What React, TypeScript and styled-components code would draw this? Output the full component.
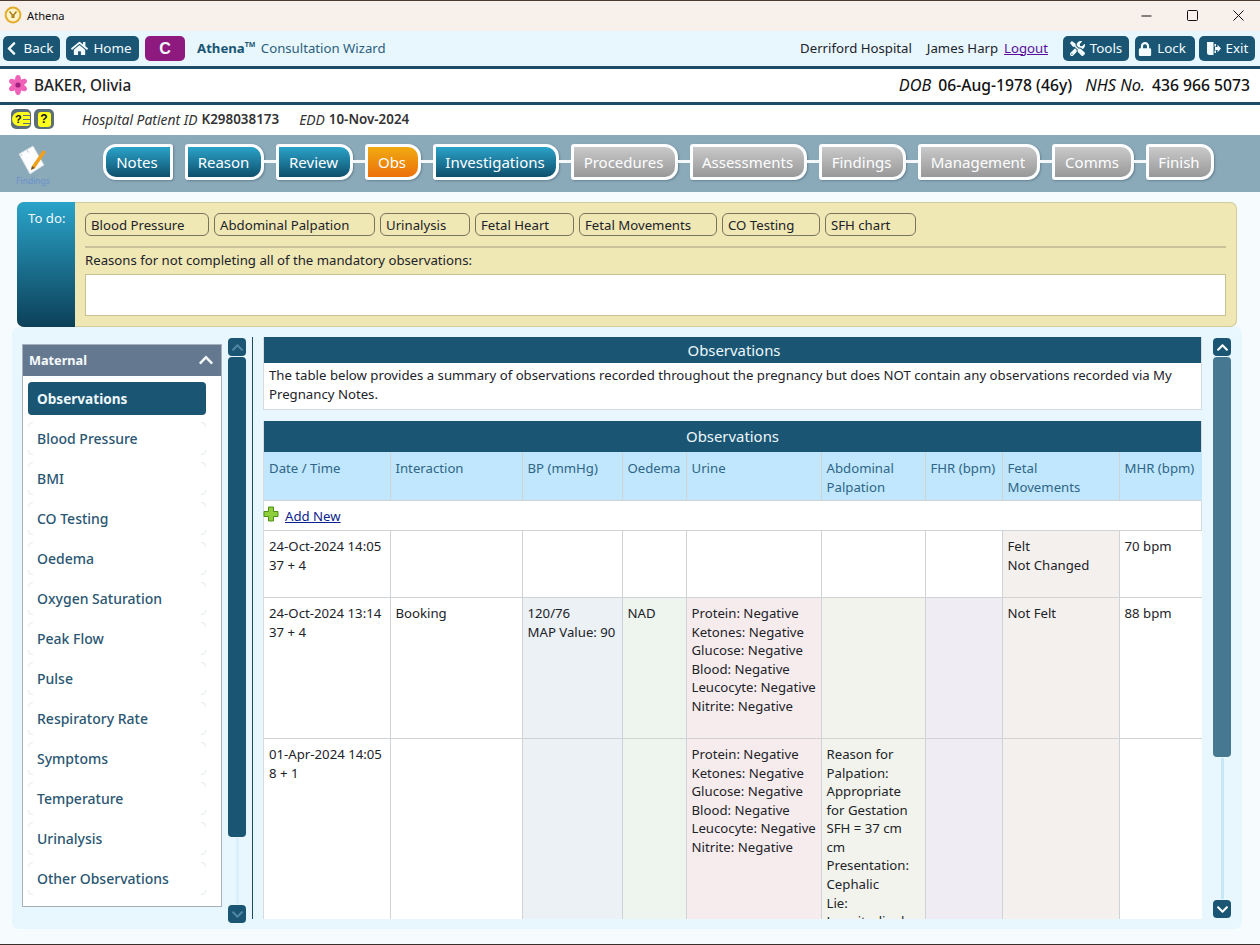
import React from 'react';
import styled, { createGlobalStyle, css } from 'styled-components';
import { FaChevronLeft, FaChevronUp, FaChevronDown, FaHome, FaTools, FaLock } from 'react-icons/fa';

const FONT = `"Noto Sans", "Open Sans", sans-serif`;
const navy = '#1a5673';
const line = '#d0d3d6';

const GlobalStyle = createGlobalStyle`
  html, body { margin: 0; padding: 0; }
  body {
    font-family: ${FONT};
    font-size: 13.2px;
    color: #1c2329;
    background: #f6fbfd;
    overflow: hidden;
  }
`;

type Step = { label: string; w: number; tone: 'done' | 'current' | 'todo'; shape: 'first' | 'rest'; linked: boolean };

const steps: Step[] = [
  { label: 'Notes', w: 70, tone: 'done', shape: 'first', linked: false },
  { label: 'Reason', w: 79, tone: 'done', shape: 'rest', linked: false },
  { label: 'Review', w: 77, tone: 'done', shape: 'rest', linked: true },
  { label: 'Obs', w: 56, tone: 'current', shape: 'rest', linked: true },
  { label: 'Investigations', w: 126, tone: 'done', shape: 'rest', linked: true },
  { label: 'Procedures', w: 107, tone: 'todo', shape: 'rest', linked: true },
  { label: 'Assessments', w: 117, tone: 'todo', shape: 'rest', linked: true },
  { label: 'Findings', w: 87, tone: 'todo', shape: 'rest', linked: true },
  { label: 'Management', w: 122, tone: 'todo', shape: 'rest', linked: true },
  { label: 'Comms', w: 82, tone: 'todo', shape: 'rest', linked: true },
  { label: 'Finish', w: 68, tone: 'todo', shape: 'rest', linked: true },
];

const todos = [
  { label: 'Blood Pressure', w: 124 },
  { label: 'Abdominal Palpation', w: 161 },
  { label: 'Urinalysis', w: 90 },
  { label: 'Fetal Heart', w: 99 },
  { label: 'Fetal Movements', w: 138 },
  { label: 'CO Testing', w: 98 },
  { label: 'SFH chart', w: 91 },
];

const menu = [
  'Observations', 'Blood Pressure', 'BMI', 'CO Testing', 'Oedema', 'Oxygen Saturation', 'Peak Flow',
  'Pulse', 'Respiratory Rate', 'Symptoms', 'Temperature', 'Urinalysis', 'Other Observations',
];

const columns = [
  { title: 'Date / Time', w: 126, tint: '#ffffff' },
  { title: 'Interaction', w: 132, tint: '#ffffff' },
  { title: 'BP (mmHg)', w: 100, tint: '#ecf1f5' },
  { title: 'Oedema', w: 64, tint: '#eef4ee' },
  { title: 'Urine', w: 135, tint: '#f6eced' },
  { title: 'Abdominal Palpation', w: 104, tint: '#f2f3ec' },
  { title: 'FHR (bpm)', w: 77, tint: '#efecf4' },
  { title: 'Fetal Movements', w: 117, tint: '#f4f0ed' },
  { title: 'MHR (bpm)', w: 83, tint: '#ffffff' },
];

const urine = ['Protein: Negative', 'Ketones: Negative', 'Glucose: Negative', 'Blood: Negative', 'Leucocyte: Negative', 'Nitrite: Negative'];

// only the columns listed in `filled` carry their tint on that row
const rows: { h?: number; filled: number[]; cells: string[][] }[] = [
  {
    h: 67,
    filled: [7],
    cells: [['24-Oct-2024 14:05', '37 + 4'], [], [], [], [], [], [], ['Felt', 'Not Changed'], ['70 bpm']],
  },
  {
    h: 141,
    filled: [2, 3, 4, 5, 6, 7],
    cells: [['24-Oct-2024 13:14', '37 + 4'], ['Booking'], ['120/76', 'MAP Value: 90'], ['NAD'], urine, [], [], ['Not Felt'], ['88 bpm']],
  },
  {
    filled: [2, 3, 4, 5, 6, 7],
    cells: [
      ['01-Apr-2024 14:05', '8 + 1'], [], [], [], urine,
      ['Reason for', 'Palpation:', 'Appropriate', 'for Gestation', 'SFH = 37 cm', 'cm', 'Presentation:', 'Cephalic', 'Lie:', 'Longitudinal'],
      [], [], [],
    ],
  },
];

const Window = styled.div`
  width: 1260px;
  height: 945px;
  display: flex;
  flex-direction: column;
  overflow: hidden;
  border-top: 1px solid #4b3a30;
  border-bottom: 1px solid #3a2f2a;
  box-sizing: border-box;
`;

const TitleBar = styled.div`
  height: 30px;
  box-sizing: border-box;
  flex: none;
  background: #f7f0eb;
  display: flex;
  align-items: center;
  padding: 0 0 2px 4px;
  gap: 5px;
  font-size: 11.2px;
  color: #111;
`;

const WindowControls = styled.div`
  margin-left: auto;
  margin-right: -1px;
  display: flex;
  align-items: center;
`;

const WindowButton = styled.div`
  width: 46px;
  height: 28px;
  display: flex;
  align-items: center;
  justify-content: center;
`;

const Toolbar = styled.div`
  height: 35px;
  flex: none;
  background: #e8f6fe;
  display: flex;
  align-items: center;
  padding: 0 5px 0 3px;
`;

const ToolButton = styled.div<{ $w: number; $mr?: number; $pr?: number; $purple?: boolean }>`
  width: ${p => p.$w}px;
  height: 25px;
  box-sizing: border-box;
  margin-right: ${p => p.$mr ?? 6}px;
  padding: 0 ${p => p.$pr ?? 0}px 2px 0;
  border-radius: 5px;
  background: ${p => (p.$purple ? '#8e1a80' : navy)};
  color: #f4fbff;
  display: flex;
  align-items: center;
  justify-content: center;
  gap: 5px;
  font-size: 13.4px;
  svg { margin-top: 2px; }
  ${p => p.$purple && css`font-family: "Liberation Sans", sans-serif; font-weight: 700; font-size: 16px; padding-bottom: 0;`}
`;

const AppName = styled.div`
  margin: 0 0 2px 6px;
  color: #2b5f7c;
  b { color: ${navy}; font-weight: 700; }
  sup { font-size: 7px; font-weight: 700; line-height: 0; color: ${navy}; margin-right: 2px; }
`;

const UserArea = styled.div`
  margin-left: auto;
  display: flex;
  align-items: center;
  color: #1c2329;
`;

const UserText = styled.span`
  margin-bottom: 2px;
`;

const Logout = styled.a`
  color: #5a0d9c;
  text-decoration: underline;
  margin: 0 15px 2px 6px;
`;

const Hospital = styled(UserText)`
  margin-right: 15px;
`;

const PatientBar = styled.div`
  height: 31px;
  flex: none;
  box-sizing: content-box;
  background: #fff;
  border-top: 3px solid #1d4d66;
  border-bottom: 3px solid #1d4d66;
  display: flex;
  align-items: center;
  padding: 0 10px 2px 8px;
  font-size: 15.7px;
  line-height: 30px;
`;

const PatientName = styled.div`
  margin-left: 6px;
  font-weight: 500;
  color: #222;
  font-size: 15.3px;
`;

const PatientFacts = styled.div`
  margin-left: auto;
  color: #111;
  i { margin: 0 3px 0 13px; font-size: 16.3px; }
  b { font-weight: 500; }
`;

const InfoRow = styled.div`
  height: 30px;
  box-sizing: border-box;
  flex: none;
  background: #fff;
  display: flex;
  align-items: center;
  padding: 0 0 2px 11px;
  color: #333;
  i { margin-right: 4px; font-size: 13.9px; }
  b { font-weight: 600; margin-right: 20px; font-size: 13.4px; }
`;

const Badges = styled.div`
  display: flex;
  gap: 3px;
  margin-right: 28px;
`;

const Badge = styled.div`
  width: 20px;
  height: 20px;
  border-radius: 5px;
  background: #5c6f78;
  display: flex;
  align-items: center;
  justify-content: center;
`;

const HandFace = styled.div`
  width: 18px;
  height: 14px;
  border-radius: 7px 3px 3px 7px;
  background: #ffff1e;
  display: flex;
  align-items: center;
  color: #111;
  font: 700 11px/14px "Liberation Sans", sans-serif;
  padding-left: 3px;
  box-sizing: border-box;
  gap: 1px;
`;

const HandFingers = styled.div`
  flex: 1;
  height: 9px;
  background: repeating-linear-gradient(#5c6f78 0 1px, #ffff1e 1px 4px);
`;

const BadgeFace = styled.div`
  width: 13px;
  height: 15px;
  border-radius: 3px;
  background: #ffff1e;
  color: #111;
  font: 700 12px/15px "Liberation Sans", sans-serif;
  text-align: center;
`;

const NavBar = styled.div`
  height: 57px;
  flex: none;
  background: #8aa9b9;
  display: flex;
  align-items: flex-start;
`;

const NavIcon = styled.div`
  width: 103px;
  height: 57px;
  flex: none;
  display: flex;
  flex-direction: column;
  align-items: center;
  padding: 10px 37px 0 0;
  box-sizing: border-box;
  font-size: 8.5px;
  color: #6a92cc;
  line-height: 10px;
`;

const NavSteps = styled.div`
  display: flex;
  align-items: center;
  gap: 12px;
  margin-top: 9px;
`;

const toneBg = {
  done: 'linear-gradient(#2aa3c9, #0f4f6c)',
  current: 'linear-gradient(#f0aa10, #ec700c)',
  todo: 'linear-gradient(#c9c9c9, #989898)',
};

const NavStep = styled.div<{ $w: number; $tone: Step['tone']; $shape: Step['shape']; $linked: boolean }>`
  position: relative;
  width: ${p => p.$w}px;
  height: 36px;
  box-sizing: border-box;
  padding-right: 2px;
  border: 3px solid #fbfdfe;
  border-radius: ${p => (p.$shape === 'first' ? '13px 3px 3px 13px' : '3px 13px 13px 3px')};
  background: ${p => toneBg[p.$tone]};
  box-shadow: 1px 1px 2px rgba(40, 60, 70, 0.35);
  color: #fdfeff;
  font-size: 15px;
  display: flex;
  align-items: center;
  justify-content: center;
  ${p => p.$linked && css`
    &::before {
      content: '';
      position: absolute;
      left: -15px;
      top: 13px;
      width: 12px;
      height: 3px;
      background: #f4f8fa;
    }
  `}
`;

const Body = styled.div`
  flex: 1;
  min-height: 0;
  display: flex;
  flex-direction: column;
  padding: 10px 18px 15px 12px;
`;

const TodoPanel = styled.div`
  margin: 0 5px;
  height: 125px;
  flex: none;
  display: flex;
  border-radius: 7px;
  overflow: hidden;
  background: #efe7b4;
  box-shadow: inset 0 0 0 1px #d2cb9d;
`;

const TodoLabel = styled.div`
  width: 58px;
  flex: none;
  box-sizing: border-box;
  padding: 7px 0 0 11px;
  color: #eef9ff;
  background: linear-gradient(#2aa3c9, #0c4058);
`;

const TodoBody = styled.div`
  flex: 1;
  padding: 11px 11px 11px 10px;
  display: flex;
  flex-direction: column;
`;

const TodoChips = styled.div`
  display: flex;
  gap: 5px;
  padding-bottom: 10px;
  border-bottom: 2px solid #c9c298;
`;

const TodoChip = styled.div<{ $w: number }>`
  width: ${p => p.$w}px;
  height: 23px;
  box-sizing: border-box;
  border: 1px solid #77735c;
  border-radius: 6px;
  padding-left: 5px;
  line-height: 22px;
  color: #1c2329;
`;

const TodoPrompt = styled.div`
  margin-top: 1px;
  height: 22px;
  line-height: 22px;
`;

const ReasonBox = styled.div`
  flex: 1;
  margin-top: 3px;
  background: #fff;
  border: 1px solid #c7c08f;
`;

const Main = styled.div`
  flex: 1;
  min-height: 0;
  display: flex;
  background: #e8f6fe;
  border-radius: 7px;
  padding: 10px;
`;

const SideColumn = styled.div`
  width: 200px;
  flex: none;
  padding-top: 7px;
  overflow: hidden;
  display: flex;
  flex-direction: column;
  gap: 14px;
`;

const MenuPanel = styled.div`
  border: 1px solid #a7b1bb;
  background: #fff;
  flex: none;
`;

const MenuHeader = styled.div`
  height: 31px;
  box-sizing: border-box;
  background: #64798f;
  color: #f5f9fc;
  display: flex;
  align-items: center;
  justify-content: space-between;
  padding: 0 7px 2px 6px;
  font-weight: 700;
  font-size: 12.7px;
`;

const MenuList = styled.div`
  padding: 6px 15px 11px 5px;
  display: flex;
  flex-direction: column;
  gap: 7px;
`;

const MenuItem = styled.div<{ $active?: boolean }>`
  position: relative;
  height: 33px;
  box-sizing: border-box;
  border-radius: 4px;
  padding-left: 9px;
  display: flex;
  align-items: center;
  font-weight: 500;
  font-size: 14px;
  color: ${p => (p.$active ? '#eef7fb' : '#2a5672')};
  background: ${p => (p.$active ? navy : 'transparent')};
  ${p => p.$active && css`font-weight: 700; font-size: 13.6px;`}
  ${p => !p.$active && css`
    border: 1px solid #e3ebef;
    padding-left: 8px;
    &::before {
      content: '';
      position: absolute;
      left: 4px; right: 4px; top: -1px; bottom: -1px;
      background: #fff;
    }
    &::after {
      content: '';
      position: absolute;
      left: -1px; right: -1px; top: 4px; bottom: 4px;
      background: #fff;
    }
  `}
  span { position: relative; z-index: 1; }
`;

const CollapsedPanel = styled.div`
  height: 30px;
  flex: none;
  border: 1px solid #a7b1bb;
  background: #fff;
`;

const ScrollBar = styled.div<{ $h: number }>`
  width: 18px;
  flex: none;
  margin-top: 1px;
  height: ${p => p.$h}px;
  display: flex;
  flex-direction: column;
  align-items: center;
  gap: 1px;
`;

const ScrollButton = styled.div<{ $dim?: boolean }>`
  width: 18px;
  height: 18px;
  flex: none;
  border-radius: 4px;
  background: ${navy};
  color: ${p => (p.$dim ? '#4f86a2' : '#fff')};
  display: flex;
  align-items: center;
  justify-content: center;
`;

const ScrollThumb = styled.div<{ $h: number; $light?: boolean }>`
  width: 18px;
  height: ${p => p.$h}px;
  flex: none;
  border-radius: 4px;
  background: ${p => (p.$light ? '#467991' : navy)};
`;

const ScrollTrack = styled.div<{ $pale?: boolean }>`
  flex: 1;
  width: 3px;
  background: ${p => (p.$pale ? '#d9effb' : '#c6e7f8')};
`;

const SideGap = styled.div<{ $w: number }>`
  width: ${p => p.$w}px;
  flex: none;
`;

const Divider = styled.div`
  width: 1px;
  flex: none;
  margin: 0 10px 0 6px;
  background: #1d4d66;
  height: 582px;
`;

const Content = styled.div`
  width: 939px;
  flex: none;
  height: 582px;
  overflow: hidden;
  display: flex;
  flex-direction: column;
  gap: 11px;
`;

const Panel = styled.div`
  background: #fff;
  border: 1px solid #d5dbdf;
  border-top: 0;
  flex: none;
`;

const PanelHeader = styled.div<{ $h: number; $pl?: number }>`
  height: ${p => p.$h}px;
  box-sizing: border-box;
  padding: 0 0 1px ${p => p.$pl ?? 0}px;
  background: ${navy};
  color: #eef7fb;
  font-size: 14.9px;
  display: flex;
  align-items: center;
  justify-content: center;
`;

const PanelText = styled.div`
  padding: 3px 5px 6px;
  line-height: 18.7px;
`;

const Table = styled.table`
  width: 938px;
  table-layout: fixed;
  border-collapse: collapse;
`;

const HeadCell = styled.th`
  background: #c0e7fd;
  border-right: 1px solid ${line};
  border-bottom: 1px solid ${line};
  height: 48px;
  padding: 7px 5px 0 5px;
  box-sizing: border-box;
  vertical-align: top;
  text-align: left;
  font-weight: 400;
  color: #2f6686;
  line-height: 18.7px;
  &:last-child { border-right: 0; padding-right: 0; }
`;

const AddCell = styled.td`
  height: 30px;
  box-sizing: border-box;
  padding: 0 5px 0 0;
  border-bottom: 1px solid ${line};
`;

const AddLink = styled.div`
  display: flex;
  align-items: center;
  gap: 6px;
  a { color: #0d1f8c; text-decoration: underline; padding-top: 2px; }
  svg { margin: -3px 0 0 -1px; }
`;

const Cell = styled.td<{ $tint: string; $h?: number }>`
  background: ${p => p.$tint};
  ${p => p.$h && css`height: ${p.$h}px;`}
  box-sizing: border-box;
  border-right: 1px solid ${line};
  border-bottom: 1px solid ${line};
  padding: 6px 0 0 5px;
  vertical-align: top;
  line-height: 18.6px;
  white-space: nowrap;
  overflow: hidden;
  &:last-child { border-right: 0; }
`;

const CellLine = styled.div``;

const TitleLogo = () => (
  <svg width="18" height="18" viewBox="0 0 18 18">
    <circle cx="9" cy="9" r="7.400" fill="#fdf3c8" stroke="#e3ad2c" strokeWidth="2" />
    <path d="M5.500 5.500l2.700 3.200v3.300M12.500 5.500L9.800 8.700v3.300" fill="none" stroke="#a8801a" strokeWidth="1.500" />
  </svg>
);

const Flower = () => (
  <svg width="20" height="20" viewBox="0 0 20 20">
    {[0, 60, 120, 180, 240, 300].map(a => (
      <ellipse key={a} cx="10" cy="4.800" rx="3" ry="4.800" fill="#f062b8" transform={`rotate(${a} 10 10)`} />
    ))}
    <circle cx="10" cy="10" r="2.600" fill="#a3217e" />
  </svg>
);

const NotePad = () => (
  <svg width="30" height="31" viewBox="0 0 30 31">
    <path d="M1 9L15 1l11 19-14 9z" fill="#fbfdff" stroke="#cfd8dc" strokeWidth="0.800" />
    <path d="M9 5l1.500 2.500M3 9l1 1.500" stroke="#b7c4cc" strokeWidth="1" />
    <path d="M14 21L25 5l3 2-11 16-4 2z" fill="#f0a01c" />
    <path d="M13 25l1-4 3 2z" fill="#7a5a2a" />
  </svg>
);

const PlusIcon = () => (
  <svg width="16" height="16" viewBox="0 0 16 16">
    <path d="M5.500 1h5v4.500H15v5h-4.500V15h-5v-4.500H1v-5h4.500z" fill="#8ccf3a" stroke="#4d8f16" strokeWidth="1" strokeLinejoin="round" />
  </svg>
);

const ExitIcon = () => (
  <svg width="15" height="15" viewBox="0 0 15 15" fill="#f4fbff">
    <path d="M1 1h6.500v13H3.500a2.500 2.500 0 0 1-2.500-2.500z" />
    <path d="M8.500 3H10v2.500H8.500zM8.500 9.500H10V12H8.500z" />
    <path d="M9 6h2.500V3.800L15 7.500l-3.500 3.700V9H9z" />
  </svg>
);

export default function App() {
  return (
    <Window>
      <GlobalStyle />
      <TitleBar>
        <TitleLogo />
        <span>Athena</span>
        <WindowControls>
          <WindowButton>
            <svg width="11" height="11" viewBox="0 0 11 11"><path d="M0.500 6h10" stroke="#111" /></svg>
          </WindowButton>
          <WindowButton>
            <svg width="11" height="11" viewBox="0 0 11 11"><rect x="0.500" y="0.500" width="10" height="10" rx="1" fill="none" stroke="#111" /></svg>
          </WindowButton>
          <WindowButton>
            <svg width="11" height="11" viewBox="0 0 11 11"><path d="M0.500 0.500l10 10M10.500 0.500l-10 10" stroke="#111" /></svg>
          </WindowButton>
        </WindowControls>
      </TitleBar>

      <Toolbar>
        <ToolButton $w={57} $pr={6}><FaChevronLeft size={15} />Back</ToolButton>
        <ToolButton $w={73} $pr={2}><FaHome size={17} />Home</ToolButton>
        <ToolButton $w={40} $purple>C</ToolButton>
        <AppName><b>Athena<sup>TM</sup></b> Consultation Wizard</AppName>
        <UserArea>
          <Hospital>Derriford Hospital</Hospital>
          <UserText>James Harp</UserText>
          <Logout>Logout</Logout>
          <ToolButton $w={66}><FaTools size={15} />Tools</ToolButton>
          <ToolButton $w={60} $mr={4} $pr={6}><FaLock size={14} />Lock</ToolButton>
          <ToolButton $w={56} $mr={0}><ExitIcon />Exit</ToolButton>
        </UserArea>
      </Toolbar>

      <PatientBar>
        <Flower />
        <PatientName>BAKER, Olivia</PatientName>
        <PatientFacts>
          <i>DOB</i> <b>06-Aug-1978 (46y)</b>
          <i>NHS No.</i> <b>436 966 5073</b>
        </PatientFacts>
      </PatientBar>

      <InfoRow>
        <Badges>
          <Badge><HandFace>?<HandFingers /></HandFace></Badge>
          <Badge><BadgeFace>?</BadgeFace></Badge>
        </Badges>
        <i>Hospital Patient ID</i><b>K298038173</b>
        <i>EDD</i><b>10-Nov-2024</b>
      </InfoRow>

      <NavBar>
        <NavIcon>
          <NotePad />
          <span>Findings</span>
        </NavIcon>
        <NavSteps>
          {steps.map(s => (
            <NavStep key={s.label} $w={s.w} $tone={s.tone} $shape={s.shape} $linked={s.linked}>{s.label}</NavStep>
          ))}
        </NavSteps>
      </NavBar>

      <Body>
        <TodoPanel>
          <TodoLabel>To do:</TodoLabel>
          <TodoBody>
            <TodoChips>
              {todos.map(t => <TodoChip key={t.label} $w={t.w}>{t.label}</TodoChip>)}
            </TodoChips>
            <TodoPrompt>Reasons for not completing all of the mandatory observations:</TodoPrompt>
            <ReasonBox />
          </TodoBody>
        </TodoPanel>

        <Main>
          <SideColumn>
            <MenuPanel>
              <MenuHeader>
                Maternal
                <FaChevronUp size={16} />
              </MenuHeader>
              <MenuList>
                {menu.map((m, i) => (
                  <MenuItem key={m} $active={i === 0}><span>{m}</span></MenuItem>
                ))}
              </MenuList>
            </MenuPanel>
            <CollapsedPanel />
          </SideColumn>
          <SideGap $w={6} />
          <ScrollBar $h={585}>
            <ScrollButton $dim><FaChevronUp size={13} /></ScrollButton>
            <ScrollThumb $h={480} />
            <ScrollTrack $pale />
            <ScrollButton $dim><FaChevronDown size={13} /></ScrollButton>
          </ScrollBar>
          <Divider />
          <Content>
            <Panel>
              <PanelHeader $h={26} $pl={3}>Observations</PanelHeader>
              <PanelText>
                The table below provides a summary of observations recorded throughout the pregnancy but does NOT contain any observations recorded via My Pregnancy Notes.
              </PanelText>
            </Panel>
            <Panel>
              <PanelHeader $h={31}>Observations</PanelHeader>
              <Table>
                <colgroup>
                  {columns.map(c => <col key={c.title} width={c.w} />)}
                </colgroup>
                <thead>
                  <tr>
                    {columns.map(c => <HeadCell key={c.title}>{c.title}</HeadCell>)}
                  </tr>
                </thead>
                <tbody>
                  <tr>
                    <AddCell colSpan={columns.length}>
                      <AddLink><PlusIcon /><a>Add New</a></AddLink>
                    </AddCell>
                  </tr>
                  {rows.map((r, ri) => (
                    <tr key={ri}>
                      {r.cells.map((lines, ci) => (
                        <Cell key={ci} $h={r.h} $tint={r.filled.includes(ci) ? columns[ci].tint : '#ffffff'}>
                          {lines.map((l, li) => <CellLine key={li}>{l}</CellLine>)}
                        </Cell>
                      ))}
                    </tr>
                  ))}
                </tbody>
              </Table>
            </Panel>
          </Content>
          <SideGap $w={11} />
          <ScrollBar $h={580}>
            <ScrollButton><FaChevronUp size={13} /></ScrollButton>
            <ScrollThumb $h={400} $light />
            <ScrollTrack />
            <ScrollButton><FaChevronDown size={13} /></ScrollButton>
          </ScrollBar>
        </Main>
      </Body>
    </Window>
  );
}
